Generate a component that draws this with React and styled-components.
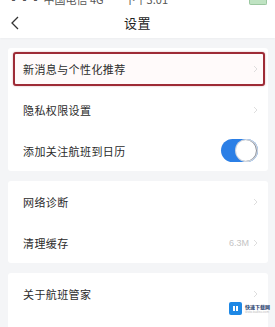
import React from "react";
import styled, { createGlobalStyle } from "styled-components";

const Global = createGlobalStyle`
  html, body { margin: 0; padding: 0; background: #f4f5f7; }
  body { font-family: "Noto Sans CJK SC", "Noto Sans", sans-serif; overflow: hidden; }
`;

const Page = styled.div`
  width: 275px;
  height: 327px;
  background: #f4f5f7;
  position: relative;
  overflow: hidden;
`;

const StatusBar = styled.div`
  height: 6px;
  background: #fff;
  position: relative;
  overflow: hidden;
  font-size: 11px;
  color: #555;
  display: flex;
  justify-content: space-between;
  padding: 0 8px;
  line-height: 0;
`;

const StatusText = styled.span`
  transform: translateY(-4px);
  display: block;
  line-height: 6px;
  white-space: nowrap;
`;

const Battery = styled.span`
  width: 16px;
  height: 4px;
  border: 1px solid #9bc7a0;
  border-top: none;
  background: #bfe3c2;
  border-radius: 0 0 2px 2px;
  margin-left: 60px;
`;

const NavBar = styled.div`
  height: 32px;
  background: #fff;
  display: flex;
  align-items: center;
  justify-content: center;
  position: relative;
  box-shadow: 0 1px 2px rgba(0, 0, 0, 0.03);
`;

const Back = styled.svg`
  position: absolute;
  left: 10px;
  top: 10px;
`;

const Title = styled.div`
  font-size: 13px;
  color: #222;
  letter-spacing: 0.5px;
`;

const Content = styled.div`
  padding: 10px 7px 0 8px;
  display: flex;
  flex-direction: column;
  gap: 10px;
`;

const Card = styled.div`
  background: #fff;
  border-radius: 3px;
  display: flex;
  flex-direction: column;
`;

const Row = styled.div`
  height: ${(p) => p.$h || 41}px;
  display: flex;
  align-items: center;
  padding: 0 10px 0 15px;
  box-sizing: border-box;
  position: relative;
`;

const Highlight = styled.div`
  position: absolute;
  left: 5px;
  right: 3px;
  top: 4px;
  bottom: 3px;
  border: 2px solid #9e2b36;
  border-radius: 3px;
  background: #fffafa;
  box-shadow: 0 0 2px rgba(158, 43, 54, 0.4);
`;

const Label = styled.span`
  font-size: 11px;
  color: #2b2b2b;
  letter-spacing: 0.4px;
  flex: 1;
  position: relative;
`;

const Value = styled.span`
  font-size: 9px;
  color: #c4c4c4;
  margin-right: 4px;
  font-family: "Liberation Sans", sans-serif;
`;

const Chevron = styled.svg`
  position: relative;
  flex: none;
`;

const Toggle = styled.div`
  width: 37px;
  height: 23px;
  border-radius: 12px;
  background: #2b7fe6;
  position: relative;
  margin-right: 0;
  flex: none;
`;

const Knob = styled.div`
  position: absolute;
  right: 1px;
  top: 1px;
  width: 21px;
  height: 21px;
  border-radius: 50%;
  background: #fff;
  box-shadow: inset -1px 0 0 #8a8f99, 0 0 0 1px #cfd6e0;
`;

const Watermark = styled.div`
  position: absolute;
  right: 5px;
  bottom: 12px;
  display: flex;
  align-items: center;
  gap: 3px;
`;

const WmIcon = styled.div`
  width: 13px;
  height: 13px;
  background: #1e88e5;
  border-radius: 2px;
  display: flex;
  align-items: center;
  justify-content: center;
`;

const WmText = styled.div`
  display: flex;
  flex-direction: column;
  font-size: 5px;
  color: #1d3a6a;
  line-height: 6px;
  font-weight: bold;
`;

const WmSub = styled.span`
  color: #bbb;
  font-weight: normal;
  font-size: 3px;
  line-height: 4px;
`;

const Arrow = () => (
  <Chevron width="5" height="8" viewBox="0 0 5 8">
    <path d="M1 1 L4 4 L1 7" fill="none" stroke="#d6d6d6" strokeWidth="0.8" />
  </Chevron>
);

export default function App() {
  return (
    <Page>
      <Global />
      <StatusBar>
        <StatusText>▪▪▪ 中国电信 4G</StatusText>
        <StatusText>下午3:01</StatusText>
        <Battery />
      </StatusBar>
      <NavBar>
        <Back width="10" height="14" viewBox="0 0 10 14">
          <path d="M8 1 L2 7 L8 13" fill="none" stroke="#333" strokeWidth="1.3" />
        </Back>
        <Title>设置</Title>
      </NavBar>
      <Content>
        <Card>
          <Row $h={41}>
            <Highlight />
            <Label>新消息与个性化推荐</Label>
            <Arrow />
          </Row>
          <Row $h={41}>
            <Label>隐私权限设置</Label>
            <Arrow />
          </Row>
          <Row $h={41}>
            <Label>添加关注航班到日历</Label>
            <Toggle>
              <Knob />
            </Toggle>
          </Row>
        </Card>
        <Card>
          <Row $h={41}>
            <Label>网络诊断</Label>
            <Arrow />
          </Row>
          <Row $h={41}>
            <Label>清理缓存</Label>
            <Value>6.3M</Value>
            <Arrow />
          </Row>
        </Card>
        <Card>
          <Row $h={41}>
            <Label>关于航班管家</Label>
            <Arrow />
          </Row>
          <Row $h={20} />
        </Card>
      </Content>
      <Watermark>
        <WmIcon>
          <svg width="7" height="7" viewBox="0 0 7 7">
            <rect x="1" y="1" width="5" height="5" fill="#fff" />
            <rect x="3" y="1" width="1" height="5" fill="#1e88e5" />
          </svg>
        </WmIcon>
        <WmText>
          快速下载网
          <WmSub>www.kuaisu.com</WmSub>
        </WmText>
      </Watermark>
    </Page>
  );
}
